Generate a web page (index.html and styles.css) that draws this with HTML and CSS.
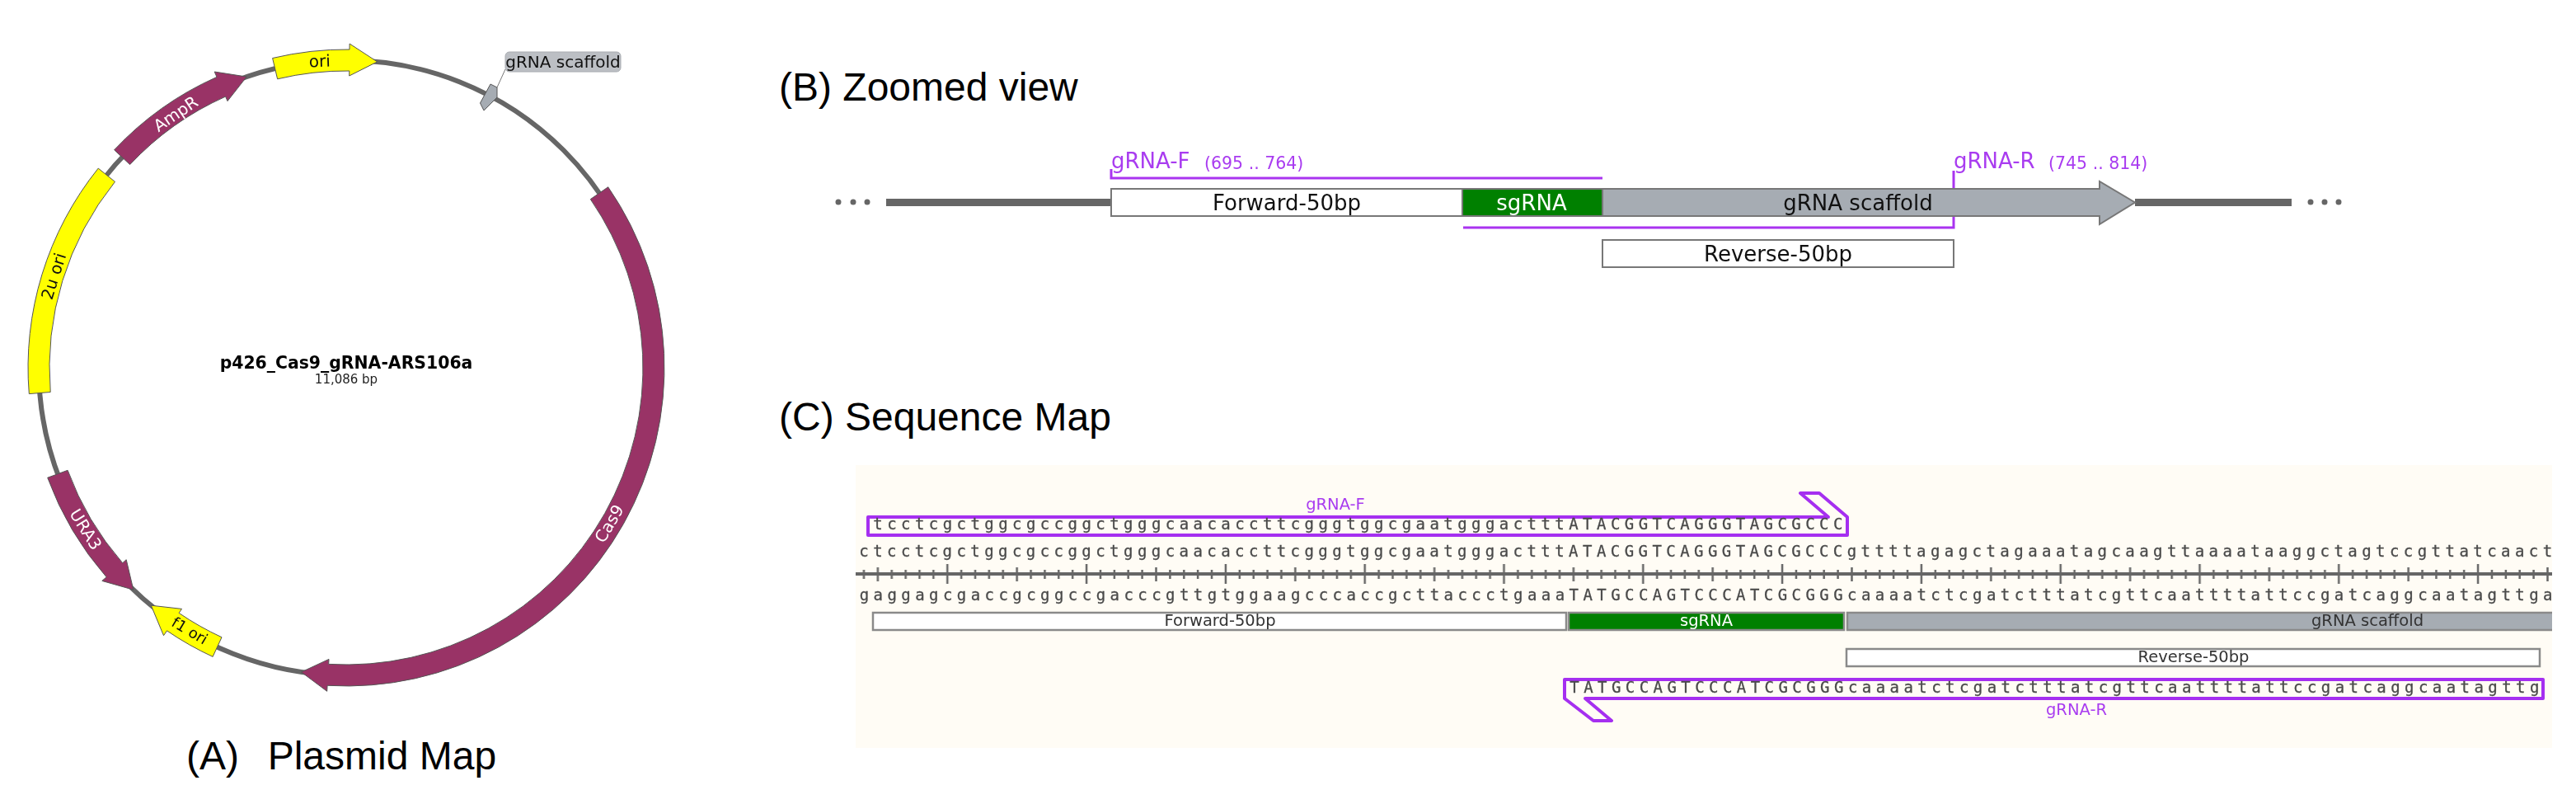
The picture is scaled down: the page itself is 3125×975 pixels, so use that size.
FILE: index.html
```html
<!DOCTYPE html>
<html lang="en">
<head>
<meta charset="utf-8">
<title>p426_Cas9_gRNA-ARS106a</title>
<link rel="stylesheet" href="styles.css">
</head>
<body>
<main class="sheet">
  <section class="col-map">
    <svg class="plasmid soft" viewBox="0 0 860 890" width="860" height="890" role="img" aria-label="Plasmid map">
      <circle class="backbone" cx="420" cy="446" r="373"/>
      <path class="feat cds" d="M737.7 226.8A386 386 0 0 1 397.1 831.3L396.7 838.3L365.5 815L399 799.4L398.7 805.4A360 360 0 0 0 716.3 241.6Z"/>
      <path class="feat ori" d="M330.6 70.5A386 386 0 0 1 424 60L424.1 53L457.7 74.9L423.7 92L423.8 86A360 360 0 0 0 336.6 95.8Z"/>
      <path class="feat cds" d="M138.6 181.8A386 386 0 0 1 263 93.4L260.2 87L299.2 93.1L276 122.6L273.6 117.1A360 360 0 0 0 157.6 199.6Z"/>
      <path class="feat ori" d="M35.3 477.6A386 386 0 0 1 119.2 204.1L139.5 220.4A360 360 0 0 0 61.2 475.5Z"/>
      <path class="feat cds" d="M57.7 579.3A386 386 0 0 0 129.1 699.8L123.8 704.4L161.8 715.2L153.2 678.7L148.7 682.7A360 360 0 0 1 82.1 570.3Z"/>
      <path class="feat ori" d="M258.1 796.4A386 386 0 0 1 202.5 764.9L198.5 770.7L183.3 734.2L220.5 738.4L217.1 743.4A360 360 0 0 0 269 772.8Z"/>
      <polygon class="feat scaffold" points="595,102 603,106 603,118 587,134 582.5,125"/>
      <line class="leader" x1="603" y1="106" x2="613" y2="84"/>
      <rect class="tag" x="613" y="63" width="140" height="24" rx="5"/>
      <text class="map-label dark mid" x="683" y="82">gRNA scaffold</text>
      <text class="map-label dark mid" transform="translate(388 81) rotate(-2)">ori</text>
      <text class="map-label light mid" transform="translate(213 138) rotate(-34) translate(0 7)">AmpR</text>
      <text class="map-label dark mid" transform="translate(65 335) rotate(-72.6) translate(0 7)">2u ori</text>
      <text class="map-label light mid" transform="translate(104 642) rotate(58) translate(0 7)">URA3</text>
      <text class="map-label light mid" transform="translate(739 635) rotate(-59.4) translate(0 7)">Cas9</text>
      <text class="map-label dark small mid" transform="translate(230 765) rotate(30.8) translate(0 6)">f1 ori</text>
      <text class="map-title mid" x="420" y="447">p426_Cas9_gRNA-ARS106a</text>
      <text class="map-sub mid" x="420" y="465">11,086 bp</text>
    </svg>
    <h2 class="caption">(A)<span class="gap">&nbsp;&nbsp;</span>Plasmid Map</h2>
  </section>

  <section class="col-detail">
    <h2 class="heading">(B) Zoomed view</h2>
    <svg class="zoomed soft" viewBox="948 180 1900 160" width="1900" height="160" role="img" aria-label="Zoomed view">
      <circle class="dot" cx="1017" cy="245" r="3.5"/>
      <circle class="dot" cx="1035" cy="245" r="3.5"/>
      <circle class="dot" cx="1052" cy="245" r="3.5"/>
      <rect class="bar" x="1075" y="241" width="273" height="9"/>
      <rect class="bar" x="2590" y="241" width="190" height="9"/>
      <circle class="dot" cx="2803" cy="245" r="3.5"/>
      <circle class="dot" cx="2820" cy="245" r="3.5"/>
      <circle class="dot" cx="2837" cy="245" r="3.5"/>
      <polyline class="primer-line" points="1348,205 1348,216 1944,216"/>
      <polyline class="primer-line" points="1775,276 2370,276 2370,207"/>
      <rect class="box blank" x="1348" y="229" width="426" height="33"/>
      <rect class="box guide" x="1774" y="229" width="170" height="33"/>
      <polygon class="box scaffold" points="1944,229 2547,229 2547,220 2590,245.5 2547,272 2547,262 1944,262"/>
      <rect class="box blank" x="1944" y="291" width="426" height="33"/>
      <text class="zoom-label dark mid" x="1561" y="255">Forward-50bp</text>
      <text class="zoom-label light mid" x="1858" y="255">sgRNA</text>
      <text class="zoom-label dark mid" x="2254" y="255">gRNA scaffold</text>
      <text class="zoom-label dark mid" x="2157" y="317">Reverse-50bp</text>
      <text class="zoom-label violet" x="1348" y="204">gRNA-F</text>
      <text class="zoom-range violet" x="1461" y="205">(695 .. 764)</text>
      <text class="zoom-label violet" x="2370" y="204">gRNA-R</text>
      <text class="zoom-range violet" x="2485" y="205">(745 .. 814)</text>
    </svg>
    <h2 class="heading">(C) Sequence Map</h2>
    <svg class="seqmap" viewBox="1038 564 2058 343" width="2058" height="343" role="img" aria-label="Sequence map">
      <defs>
        <pattern id="ruler" patternUnits="userSpaceOnUse" x="1147.3" y="684" width="168.8" height="24">
          <path class="tick" d="M2 0V24M86.4 4V21M18.9 7V18M35.8 7V18M52.6 7V18M69.5 7V18M103.3 7V18M120.2 7V18M137 7V18M153.9 7V18"/>
        </pattern>
      </defs>
      <text class="seq-label violet mid" x="1620" y="618">gRNA-F</text>
      <polygon class="primer" points="1053,627 2218,627 2184,598 2207,598 2241,627 2241,649 1053,649"/>
      <text class="seq" x="1059.3" y="642">tcctcgctggcgccggctgggcaacaccttcgggtggcgaatgggactttATACGGTCAGGGTAGCGCCC</text>
      <text class="seq" x="1042.3" y="675">ctcctcgctggcgccggctgggcaacaccttcgggtggcgaatgggactttATACGGTCAGGGTAGCGCCCgttttagagctagaaatagcaagttaaaataaggctagtccgttatcaac<tspan class="seq-end">t</tspan></text>
      <rect class="ruler-ticks" x="1038" y="684" width="2058" height="24"/>
      <rect class="ruler-line" x="1038" y="694" width="2058" height="4"/>
      <text class="seq" x="1042.7" y="728">gaggagcgaccgcggccgacccgttgtggaagcccaccgcttaccctgaaaTATGCCAGTCCCATCGCGGGcaaaatctcgatctttatcgttcaattttattccgatcaggcaatagttg<tspan class="seq-end">a</tspan></text>
      <rect class="seq-box blank" x="1059" y="743" width="841" height="21"/>
      <rect class="seq-box guide" x="1903" y="743" width="334" height="21"/>
      <rect class="seq-box scaffold" x="2241" y="743" width="900" height="21"/>
      <text class="seq-label dark mid" x="1480" y="759">Forward-50bp</text>
      <text class="seq-label light mid" x="2070" y="759">sgRNA</text>
      <text class="seq-label dark mid" x="2872" y="759">gRNA scaffold</text>
      <rect class="seq-box blank" x="2240" y="787" width="841" height="21"/>
      <text class="seq-label dark mid" x="2661" y="803">Reverse-50bp</text>
      <polygon class="primer" points="1898,824 3085,824 3085,847 1923,847 1955,874 1933,874 1898,847"/>
      <text class="seq" x="1904.3" y="840">TATGCCAGTCCCATCGCGGGcaaaatctcgatctttatcgttcaattttattccgatcaggcaatagttg</text>
      <text class="seq-label violet mid" x="2519" y="867">gRNA-R</text>
    </svg>
  </section>
</main>
</body>
</html>
```
FILE: styles.css
```css
html, body {
  margin: 0;
  padding: 0;
  background: #ffffff;
}

.sheet {
  display: grid;
  grid-template-columns: 945px 1fr;
  width: 3125px;
  height: 975px;
  overflow: hidden;
}

svg {
  display: block;
  overflow: hidden;
}

.soft { filter: blur(0.45px); }

h2 {
  margin: 0;
  font-family: "Liberation Sans", Arial, sans-serif;
  font-size: 48px;
  font-weight: 400;
  line-height: 54px;
  color: #000;
  white-space: pre;
}

.caption { padding-left: 226px; }
.gap { padding-left: 8px; }

.col-detail { padding-top: 79px; }

.zoomed { margin: 47px 0 139px 3px; }

.seqmap {
  margin: 31px 0 0 93px;
  background: #fffcf5;
  filter: blur(0.7px);
}

text {
  font-family: "DejaVu Sans", Verdana, sans-serif;
}

.mid { text-anchor: middle; }
.dark { fill: #111; }
.light { fill: #fff; }
.violet { fill: #a93cf0; }

/* plasmid */
.backbone { fill: none; stroke: #666; stroke-width: 6; }
.feat { stroke: #555; stroke-width: 1; }
.cds { fill: #993366; }
.ori { fill: #ffff00; }
.scaffold { fill: #a6acb3; }
.leader { stroke: #777; stroke-width: 1; }
.tag { fill: #bcbfc4; stroke: #a8abb0; stroke-width: 1; }
.map-label { font-size: 20px; }
.map-label.small { font-size: 18px; }
.map-title { font-size: 20.4px; font-weight: 700; fill: #000; }
.map-sub { font-size: 15px; fill: #222; }

/* zoomed view */
.dot { fill: #666; }
.bar { fill: #666; }
.primer-line { fill: none; stroke: #a934f0; stroke-width: 3; }
.box { stroke: #777; stroke-width: 2; }
.blank { fill: #ffffff; }
.guide { fill: #008000; }
.zoom-label { font-size: 26px; }
.zoom-range { font-size: 20.5px; }

/* sequence map */
.primer { fill: none; stroke: #a52ff0; stroke-width: 4; stroke-linejoin: round; }
.seq {
  font-family: "DejaVu Sans Mono", "Liberation Mono", monospace;
  font-size: 19px;
  letter-spacing: 5.44px;
  fill: #4a4a4a;
  stroke: #4a4a4a;
  stroke-width: 0.3px;
}
.seq-end { letter-spacing: 0; }
.tick { fill: none; stroke: #666; stroke-width: 2.5; }
.ruler-ticks { fill: url(#ruler); }
.ruler-line { fill: #666; }
.seq-box { stroke: #8a8a8a; stroke-width: 2.5; }
.seq-label { font-size: 19.5px; }
.seq-label.dark { fill: #333; }
```
